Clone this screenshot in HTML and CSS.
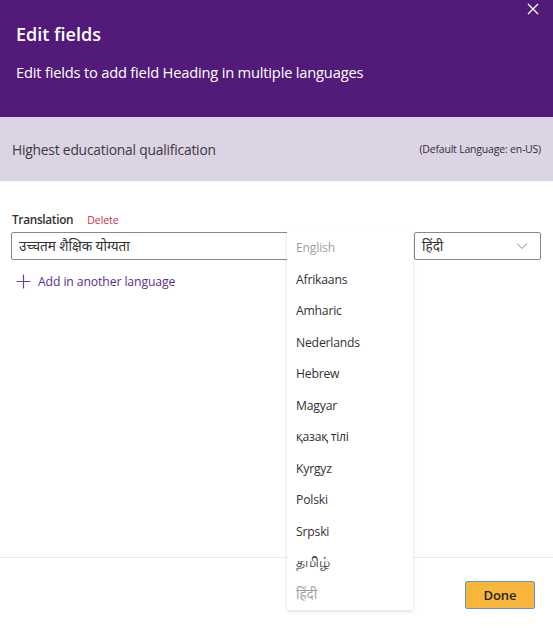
FILE: index.html
```html
<!DOCTYPE html>
<html lang="en">
<head>
<meta charset="utf-8">
<link rel="stylesheet" href="styles.css">
</head>
<body>
<div class="panel">
  <header class="header">
    <button class="close" aria-label="Close">
      <svg width="12" height="12" viewBox="0 0 12 12"><path d="M1 1 L11 11 M11 1 L1 11" stroke="#fff" stroke-width="1.3" fill="none"/></svg>
    </button>
    <h1 class="title">Edit fields</h1>
    <p class="subtitle">Edit fields to add field Heading in multiple languages</p>
  </header>
  <div class="band">
    <span class="field-name">Highest educational qualification</span>
    <span class="default-lang">(Default Language: en-US)</span>
  </div>
  <main class="content">
    <div class="label-row">
      <span class="label">Translation</span>
      <span class="delete">Delete</span>
    </div>
    <div class="field-row">
      <div class="input">उच्चतम शैक्षिक योग्यता</div>
      <div class="select">
        <span>हिंदी</span>
        <svg width="12" height="8" viewBox="0 0 12 8"><path d="M1 1.5 L6 6.5 L11 1.5" stroke="#8a8886" stroke-width="1" fill="none"/></svg>
      </div>
      <ul class="menu">
        <li class="disabled">English</li>
        <li>Afrikaans</li>
        <li>Amharic</li>
        <li>Nederlands</li>
        <li>Hebrew</li>
        <li>Magyar</li>
        <li>қазақ тілі</li>
        <li>Kyrgyz</li>
        <li>Polski</li>
        <li>Srpski</li>
        <li class="script">தமிழ்</li>
        <li class="disabled script">हिंदी</li>
      </ul>
    </div>
    <div class="add">
      <svg width="15" height="15" viewBox="0 0 15 15"><path d="M7.5 0.5 V14.5 M0.5 7.5 H14.5" stroke="#6b3fa0" stroke-width="1.2" fill="none"/></svg>
      <span>Add in another language</span>
    </div>
  </main>
  <footer class="footer">
    <button class="done">Done</button>
  </footer>
</div>
</body>
</html>
```
FILE: styles.css
```css
html, body {
  margin: 0;
  padding: 0;
  background: #fff;
}
body {
  font-family: "Open Sans", "Noto Sans", "Noto Sans CJK SC", sans-serif;
  color: #323130;
}
.panel {
  width: 553px;
  height: 640px;
  display: flex;
  flex-direction: column;
  overflow: hidden;
}
.header {
  position: relative;
  background: #521b7a;
  color: #fff;
  height: 117px;
  box-sizing: border-box;
  padding: 21px 16px 0;
}
.close {
  position: absolute;
  top: 2px;
  right: 13px;
  width: 14px;
  height: 14px;
  padding: 0;
  border: 0;
  background: none;
  display: flex;
  align-items: center;
  justify-content: center;
}
.title {
  margin: 0;
  font-size: 18px;
  font-weight: 600;
  line-height: 26px;
}
.subtitle {
  margin: 15px 0 0;
  font-size: 14.7px;
  line-height: 20px;
  letter-spacing: -0.2px;
}
.band {
  height: 64px;
  background: #dcd3e5;
  display: flex;
  align-items: center;
  justify-content: space-between;
  padding: 0 12px 0 12px;
  box-sizing: border-box;
}
.field-name {
  font-size: 13.8px;
  color: #3b3a39;
  letter-spacing: -0.2px;
}
.default-lang {
  font-size: 10.5px;
  color: #323130;
  letter-spacing: -0.2px;
}
.content {
  flex: 1;
  padding: 30px 12px 0 11px;
}
.label-row {
  display: flex;
  align-items: baseline;
  gap: 14px;
  height: 18px;
  padding-left: 1px;
}
.label {
  font-size: 11.8px;
  font-weight: 600;
  color: #323130;
  letter-spacing: -0.3px;
}
.delete {
  font-size: 10.5px;
  color: #c4314b;
  letter-spacing: -0.1px;
}
.field-row {
  position: relative;
  display: flex;
  gap: 10px;
  margin-top: 3px;
}
.input {
  width: 393px;
  height: 28px;
  box-sizing: border-box;
  border: 1px solid #8a8886;
  border-radius: 2px;
  padding: 0 7px;
  font-size: 13.5px;
  line-height: 26px;
  color: #323130;
}
.select {
  width: 127px;
  height: 28px;
  box-sizing: border-box;
  border: 1px solid #8a8886;
  border-radius: 2px;
  padding: 0 12px 0 7px;
  display: flex;
  align-items: center;
  justify-content: space-between;
  font-size: 13.5px;
}
.menu {
  position: absolute;
  left: 276px;
  top: 0;
  width: 126px;
  margin: 0;
  padding: 0;
  list-style: none;
  background: #fff;
  box-shadow: 0 1.6px 3.6px rgba(0,0,0,0.13), 0 0.3px 0.9px rgba(0,0,0,0.11);
  z-index: 2;
}
.menu li {
  height: 31.5px;
  line-height: 31.5px;
  padding-left: 9px;
  font-size: 12.2px;
  color: #323130;
  letter-spacing: -0.2px;
}
.menu li.script {
  font-size: 13.5px;
}
.menu li.disabled {
  color: #a19f9d;
}
.add {
  display: flex;
  align-items: center;
  gap: 7px;
  margin-top: 13px;
  padding-left: 5px;
  color: #5c2d91;
  font-size: 12.2px;
  letter-spacing: -0.1px;
}
.footer {
  border-top: 1px solid #edebe9;
  height: 83px;
  box-sizing: border-box;
  display: flex;
  justify-content: flex-end;
  align-items: flex-start;
  padding: 23px 18px 0 0;
}
.done {
  width: 70px;
  height: 28px;
  background: #f8b73b;
  border: 1px solid #5b9bd5;
  border-radius: 2px;
  font-family: inherit;
  font-size: 13px;
  font-weight: 600;
  color: #201f1e;
  padding: 0;
}
```
